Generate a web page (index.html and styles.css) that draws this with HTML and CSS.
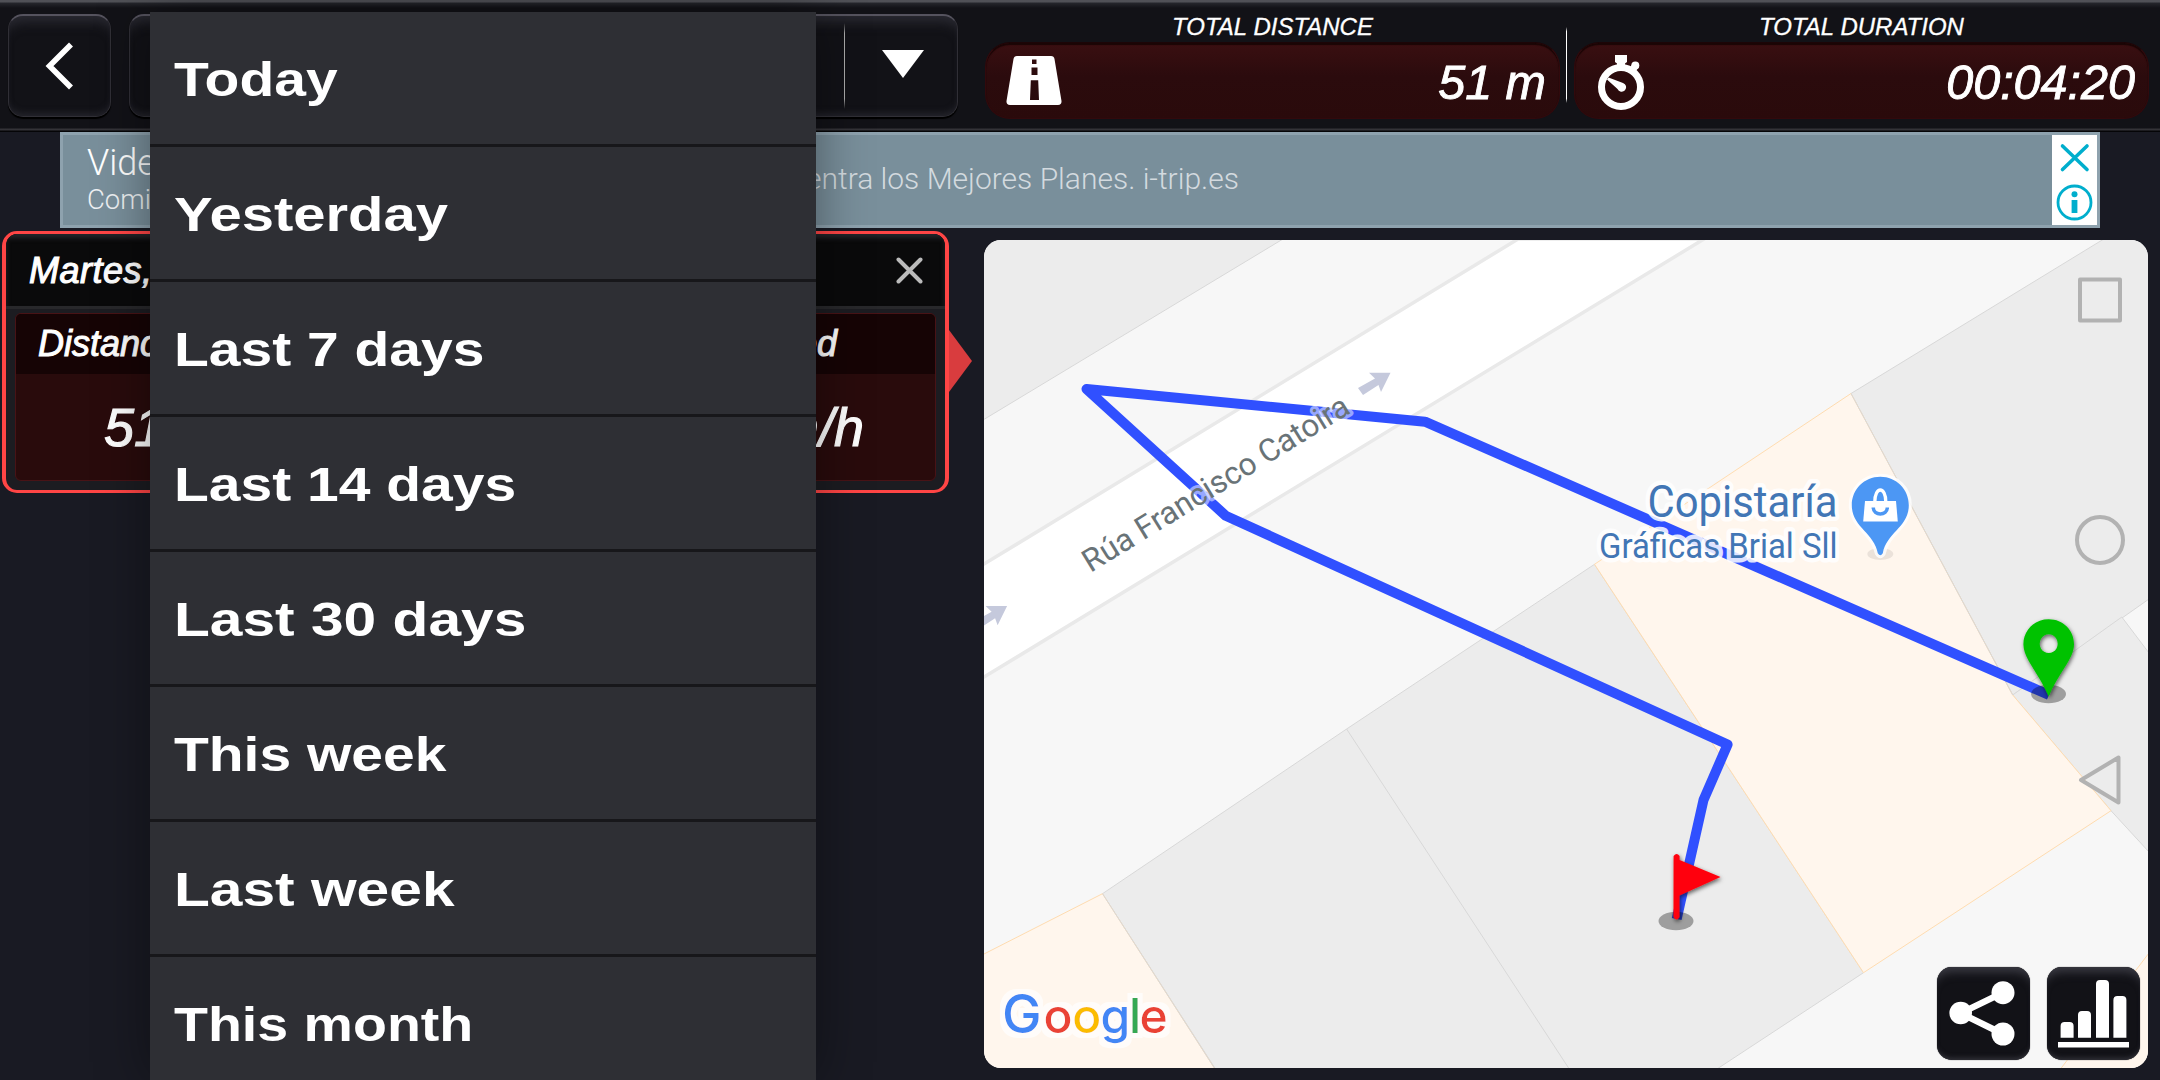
FILE: index.html
```html
<!DOCTYPE html>
<html lang="en">
<head>
<meta charset="utf-8">
<title>Trip history</title>
<link rel="stylesheet" href="styles.css">
</head>
<body>
<header class="topbar">
  <div class="controls">
    <button class="btn btn-back" aria-label="Back">
      <svg width="34" height="52" viewBox="0 0 34 52"><path d="M30 4.500 8.500 26 30 47.500" fill="none" stroke="#fff" stroke-width="5.600"/></svg>
    </button>
    <button class="btn btn-range" aria-label="Choose range">
      <span class="range-divider"></span>
      <svg class="caret" width="44" height="30" viewBox="0 0 44 30"><path d="M1 1h42L22 29z" fill="#fff"/></svg>
    </button>
  </div>
  <section class="stat">
    <h2 class="stat-title">TOTAL DISTANCE</h2>
    <div class="pill">
      <svg width="56" height="50" viewBox="0 0 56 50"><path fill="#fff" fill-rule="evenodd" d="M11 0h34q3 0 3.500 3L55.500 45q.3 4-3.500 4H4q-3.800 0-3.500-4L7.500 3Q8 0 11 0zM26 3.500v4.500h4.500V3.500zM25.500 11.500v7.500h6v-7.500zM24.800 24.300 24 44h9l-.8-19.700z"/></svg>
      <span class="stat-value">51 m</span>
    </div>
  </section>
  <span class="stat-divider"></span>
  <section class="stat">
    <h2 class="stat-title">TOTAL DURATION</h2>
    <div class="pill">
      <svg class="watch" width="50" height="56" viewBox="0 0 50 56"><g fill="none" stroke="#fff"><circle cx="24" cy="32" r="19.500" stroke-width="7"/><path d="M35 15.500 39 10" stroke-width="7"/></g><path fill="#fff" d="M18 0h12v7l-2 1.500v4h-8v-4l-2-1.500zM11.500 22.500l14.500 5.500a4.500 4.500 0 1 1-5.500 6L10 24.500z"/><circle cx="38.300" cy="10.500" r="4" fill="#fff"/></svg>
      <span class="stat-value">00:04:20</span>
    </div>
  </section>
</header>

<aside class="ad">
  <div class="ad-brand"><span class="ad-title">Vide</span><span class="ad-sub">Comi</span></div>
  <p class="ad-text">Encuentra los Mejores Planes. i-trip.es</p>
  <div class="ad-badge">
    <svg width="45" height="90" viewBox="0 0 45 90" fill="none" stroke="#00aecd"><path d="M10.500 11 35 34.500M35 11 10.500 34.500" stroke-width="3.600" stroke-linecap="round"/><circle cx="22.500" cy="67.500" r="16.500" stroke-width="2.800"/><circle cx="22.500" cy="59.300" r="3" fill="#00aecd" stroke="none"/><path d="M22.500 65v13" stroke-width="5.800"/></svg>
  </div>
</aside>

<main class="content">
  <div class="trips">
    <article class="trip">
      <div class="trip-head">
        <span>Martes,</span>
        <svg width="27" height="27" viewBox="0 0 27 27"><path d="m2.500 2.500 22 22m0-22-22 22" stroke="#bbb" stroke-width="4" stroke-linecap="round"/></svg>
      </div>
      <div class="trip-panel">
        <div class="trip-labels"><span>Distance</span><span>Speed</span></div>
        <div class="trip-values"><span>51 m</span><span>km/h</span></div>
      </div>
    </article>
    <svg class="trip-pointer" width="23" height="62" viewBox="0 0 23 62"><path d="M0 0 23 31 0 62z" fill="#d93c3e"/></svg>
  </div>

  <section class="map">
    <svg class="map-canvas" width="1164" height="828" viewBox="984 240 1164 828">
      <defs>
        <filter id="soft" x="-30%" y="-30%" width="160%" height="160%"><feDropShadow dx="1" dy="2" stdDeviation="2" flood-color="#000" flood-opacity=".6"/></filter>
        <filter id="halo" x="-10%" y="-20%" width="120%" height="140%"><feMorphology in="SourceAlpha" operator="dilate" radius="5" result="grown"/><feFlood flood-color="#fff" flood-opacity=".7"/><feComposite in2="grown" operator="in" result="glow"/><feMerge><feMergeNode in="glow"/><feMergeNode in="SourceGraphic"/></feMerge></filter>
      </defs>
      <path class="land" d="M984 240h1164v828H984z"/>
      <g class="building">
        <path d="M983 420 1283 239H983z"/>
        <path d="M1102.500 893.700 1346.600 729 1594.500 564.300 1863.500 972.700 1717 1069H1215.500z"/>
        <path d="M1346.600 729 1568.600 1068"/>
        <path d="M1851 393.500 2103 239.500H2149V599L2012.700 695z"/>
        <path d="M2012.700 695 2121.800 617 2149 653V852L2111 810.700z"/>
      </g>
      <g class="shop-area">
        <path d="M1594.500 564.300 1851 393.500 2012.700 695 2111 810.700 1863.500 972.700z"/>
        <path d="M983 954.500 1102.500 893.700 1215 1069H983z"/>
        <path d="M2149 953 2060.500 1069H2149z"/>
      </g>
      <path d="M1851 393.500 2012.700 695M1102.500 893.700 1215 1069" fill="none" stroke="#d8d8d8"/>
      <path class="road" d="M980 566.500 1518 239H1704L980 679.500z"/>
      <g fill="#c5c9dc">
        <path id="arrow" d="M1358 388 1375 378.500 1369 372.700H1390.500L1381 392 1378.500 385 1363 395z"/>
        <use href="#arrow" x="-383.400" y="233.300"/>
      </g>
      <path class="track" d="M2049 695 1425 421.700 1086.500 389 1225.700 515.700 1727.600 744.500 1703.500 800 1676.700 919"/>
      <text class="street" transform="translate(1090.500 573) rotate(-31.600)" textLength="307" lengthAdjust="spacingAndGlyphs">Rúa Francisco Catoira</text>
      <g class="poi">
        <text x="1647.500" y="516.500" font-size="44" textLength="190" lengthAdjust="spacingAndGlyphs">Copistaría</text>
        <text x="1599" y="558" font-size="34.500" textLength="238.500" lengthAdjust="spacingAndGlyphs">Gráficas Brial Sll</text>
      </g>
      <ellipse cx="1880.300" cy="554" rx="13" ry="6" fill="#000" opacity=".08"/>
      <path d="M1880.300 476.700c16 0 28.500 12.500 28.500 28.500 0 22-22 27-26 48q-2.500 4-5 0c-4-21-26-26-26-48 0-16 12.500-28.500 28.500-28.500z" fill="#4c97f4" stroke="#fff" stroke-width="6" stroke-opacity=".8" paint-order="stroke"/>
      <path d="M1865 501h31l1.800 20.500h-34.600z" fill="#fff"/>
      <path d="M1874.800 502c0-16 11-16 11 0" fill="none" stroke="#fff" stroke-width="3.300"/>
      <path d="M1873.300 507.500c0 8.500 14 8.500 14 0" fill="none" stroke="#4c97f4" stroke-width="3.500"/>
      <ellipse cx="2048.500" cy="694" rx="17.500" ry="9.300" fill="#000" opacity=".33"/>
      <path filter="url(#soft)" fill="#00c200" fill-rule="evenodd" d="M2048.700 619.300c14.500 0 25.300 11 25.300 25 0 15-16 29-25.300 52.500-9.300-23.500-25.300-37.500-25.300-52.500 0-14 10.800-25 25.300-25zm0 15a9 9.400 0 1 0 .01 0z"/>
      <ellipse cx="1676" cy="921" rx="17.500" ry="9.300" fill="#000" opacity=".33"/>
      <path filter="url(#soft)" fill="#ff000c" d="M1673.600 856q3-4 6 0v4l40.900 17-41 18.500V917q-3 5-6 0z"/>
      <g class="google" filter="url(#halo)">
        <text y="1032.500"><tspan class="g-blue g-cap" x="1002">G</tspan><tspan class="g-red" x="1043.500">o</tspan><tspan class="g-yellow" x="1072.300">o</tspan><tspan class="g-blue" x="1100.500">g</tspan><tspan class="g-green" x="1129">l</tspan><tspan class="g-red" x="1139.500">e</tspan></text>
      </g>
      <g fill="none" stroke="#b2b2b2" stroke-width="4" stroke-linejoin="round"><rect x="2080" y="279.500" width="40" height="41"/><circle cx="2100" cy="540" r="23"/><path d="M2081 780 2118.500 757.500v45z"/></g>
    </svg>
    <div class="map-actions">
      <button class="btn map-btn" aria-label="Share"><svg width="93" height="93" viewBox="1937 967 93 93"><g fill="#fff"><circle cx="2003" cy="992.700" r="11.500"/><circle cx="1960.700" cy="1013" r="11.300"/><circle cx="2003" cy="1034" r="11.500"/><path d="M2003 992.700 1960.700 1013.200 2003 1034" fill="none" stroke="#fff" stroke-width="6.500"/></g></svg></button>
      <button class="btn map-btn" aria-label="Statistics"><svg width="93" height="93" viewBox="2047 967 93 93"><path fill="#fff" d="M2060.600 1037.700V1026q0-4 4-4h5q4 0 4 4v11.700zM2078 1037.700V1015q0-4 4-4h5q4 0 4 4v22.700zM2096 1037.700V984q0-4 4-4h5q4 0 4 4v53.700zM2113.400 1037.700V1000q0-4 4-4h5q4 0 4 4v37.700zM2058 1042h71v5.500h-71z"/></svg></button>
    </div>
  </section>
</main>

<ul class="menu">
  <li><span class="snug">Today</span></li>
  <li><span>Yesterday</span></li>
  <li><span class="snug">Last 7 days</span></li>
  <li><span class="snug">Last 14 days</span></li>
  <li><span class="roomy">Last 30 days</span></li>
  <li><span class="snug">This week</span></li>
  <li><span class="roomy">Last week</span></li>
  <li><span class="tight">This month</span></li>
</ul>
</body>
</html>
```

FILE: styles.css
```css
* { box-sizing: border-box; }

body {
  position: relative;
  margin: 0;
  width: 2160px;
  height: 1080px;
  overflow: hidden;
  background: #191a23;
  color: #fff;
  font-family: "Liberation Sans", Arial, sans-serif;
}

svg { display: block; flex: none; }

/* Top bar */
.topbar {
  display: flex;
  height: 132px;
  padding: 14px 11px 0 8px;
  background: linear-gradient(#505157 0, #505157 2px, #25262c 3px, #121217 8px, #121217 128px, #343338 129px, #343338 130px, #050507 131px);
}

.controls { display: flex; flex: none; gap: 18px; width: 977px; }

.btn {
  display: flex;
  align-items: center;
  padding: 0;
  border: 1px solid #302f36;
  border-top: 2px solid #55535e;
  border-radius: 15px;
  background: #121217;
  box-shadow: inset 0 14px 12px -8px #2a2a32, inset 0 -6px 6px -3px #24242b, 0 2px 1px #000;
}

.btn-back { flex: none; width: 103px; height: 103px; justify-content: center; }
.btn-back svg { margin-right: 3px; }
.btn-range { width: 829px; flex: none; height: 103px; justify-content: flex-end; padding-right: 32px; }
.range-divider { width: 1px; height: 86px; margin-right: 36px; background: linear-gradient(#5550, #aaa 12%, #aaa 88%, #5550); }
.caret { margin-bottom: 4px; }

.stat { flex: none; width: 575px; }
.stat-title { margin: 0; height: 28px; font-size: 24px; font-style: italic; font-weight: 400; line-height: 25px; text-align: center; -webkit-text-stroke: .3px #fff; }
.stat-divider { flex: none; width: 1px; height: 76px; margin: 13px 7px 0 6px; background: linear-gradient(#fff0, #fff 6%, #fff 94%, #fff0); }

.pill {
  display: flex;
  justify-content: space-between;
  align-items: flex-start;
  height: 77px;
  padding: 14px 13px 0 20px;
  border: 1px solid #32090c;
  border-top-color: #1c0507;
  border-radius: 25px;
  background: linear-gradient(#3a0f11, #2b0b0d 45%, #2a0a0b);
  box-shadow: inset 0 2px 1px #1a0505;
}
.pill svg { margin-top: -1px; }
.pill .watch { margin: -2px 0 0 2px; }
.stat-value { font-size: 48.500px; font-style: italic; line-height: 50px; -webkit-text-stroke: .9px #fff; }

/* Ad banner */
.ad {
  display: flex;
  justify-content: space-between;
  width: 2040px;
  height: 96px;
  margin-left: 60px;
  padding-left: 24px;
  border: 3px solid #8ea2ae;
  background: #798f9b;
  font-family: Roboto, sans-serif;
  font-weight: 300;
}
.ad-brand { display: flex; flex-direction: column; width: 500px; padding-top: 7px; }
.ad-title { font-size: 36px; line-height: 42px; }
.ad-sub { font-size: 27.500px; line-height: 32px; color: #eef1f3; }
.ad-text { width: 652px; margin: 0 auto 0 0; padding-top: 26px; font-size: 30px; line-height: 36px; text-align: right; color: #d3dadf; }
.ad-badge { width: 45px; background: #fff; }

/* Trips and map */
.content { display: flex; justify-content: space-between; padding: 3px 12px 0 2px; }
.trips { display: flex; align-items: flex-start; }

.trip {
  width: 947px;
  height: 262px;
  border: solid #ff4545;
  border-width: 3px 4px;
  border-radius: 15px;
  background: #1c1c21;
  overflow: hidden;
  font-style: italic;
}
.trip-head {
  display: flex;
  justify-content: space-between;
  align-items: center;
  height: 75px;
  padding: 1px 22px 0 23px;
  border-bottom: 3px solid #28282b;
  background: #0a0a0b;
  box-shadow: inset 0 4px 5px #26272b;
  font-size: 36px;
  -webkit-text-stroke: 1.1px #fff;
}
.trip-head span { letter-spacing: .5px; }
.trip-panel {
  height: 168px;
  margin: 4px 9px 0 9px;
  border: 1px solid #481316;
  border-radius: 6px;
  background: #290b0c;
  overflow: hidden;
}
.trip-labels, .trip-values { display: flex; justify-content: space-between; }
.trip-labels { height: 60px; padding: 0 98px 0 22px; background: #160405; font-size: 36px; line-height: 60px; -webkit-text-stroke: 1px #fff; }
.trip-values { padding: 0 71px 0 88px; font-size: 54px; line-height: 106px; -webkit-text-stroke: 1.1px #fff; }
.trip-pointer { margin-top: 99px; }

.map { position: relative; width: 1164px; height: 828px; margin-top: 9px; border-radius: 17px; overflow: hidden; }
.land { fill: #f7f7f7; }
.building { fill: #ececec; stroke: #d8d8d8; stroke-width: 1; }
.shop-area { fill: #fff6ed; stroke: #ffdcb0; stroke-width: 1; }
.road { fill: #fff; stroke: #e9e9e9; stroke-width: 3.500px; }
.track { fill: none; stroke: #3050ff; stroke-width: 10px; stroke-linejoin: round; }
.street { font: 31.500px Roboto, sans-serif; fill: #697377; stroke: rgba(255, 255, 255, .5); stroke-width: 6px; stroke-linejoin: round; paint-order: stroke; }
.poi { font-family: Roboto, sans-serif; fill: #4276b5; stroke: rgba(255, 255, 255, .85); stroke-width: 9px; stroke-linejoin: round; paint-order: stroke; }
.google { font-family: Inter, sans-serif; font-size: 48px; font-weight: 500; }
.g-cap { font-size: 53px; }
.g-blue { fill: #4286f5; }
.g-red { fill: #ea4335; }
.g-yellow { fill: #fbbc05; }
.g-green { fill: #34a853; }

.map-actions { position: absolute; right: 8px; bottom: 8px; display: flex; gap: 17px; }
.map-btn { width: 93px; height: 93px; border: 0; overflow: hidden; box-shadow: inset 0 12px 10px -7px #3b3b44, inset 0 -5px 5px -3px #33333a, 0 0 1px #222; }

/* Range menu */
.menu {
  position: absolute;
  left: 150px;
  top: 12px;
  width: 666px;
  height: 1068px;
  margin: 0;
  padding: 0;
  overflow: hidden;
  list-style: none;
  background: #2e2f34;
  box-shadow: 0 0 50px rgba(0, 0, 0, .4);
  font-size: 48.500px;
  font-weight: 700;
}
.menu li { height: 135px; padding-left: 24px; border-bottom: 3px solid #17171a; line-height: 135px; white-space: nowrap; }
.menu span { display: inline-block; transform: scaleX(1.195); transform-origin: left; }
.menu .snug { transform: scaleX(1.175); }
.menu .roomy { transform: scaleX(1.21); }
.menu .tight { transform: scaleX(1.145); }
```
